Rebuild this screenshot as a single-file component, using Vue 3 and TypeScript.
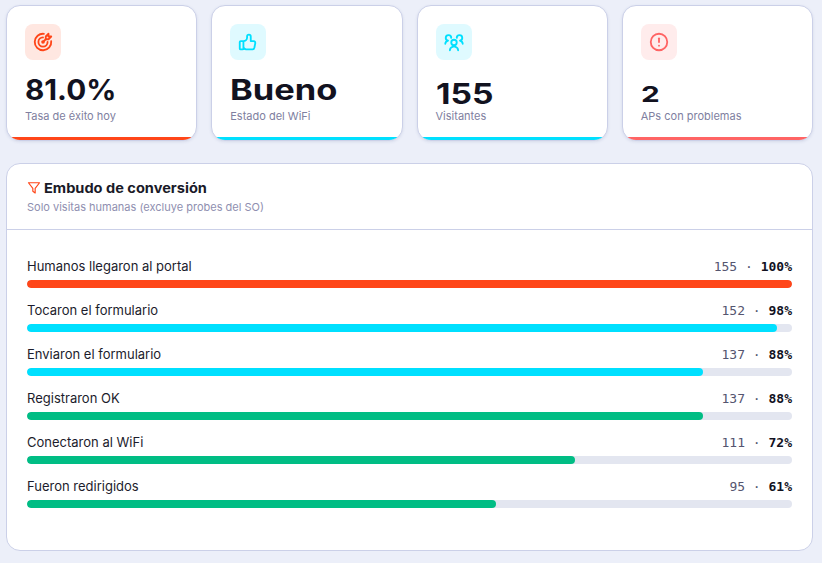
<script setup lang="ts">
// Portal dashboard: KPI cards + conversion funnel
interface Kpi { value: string; label: string; tone: string; icon: string[]; tweak: string }
interface Step { label: string; count: number; tone: string }

const kpis: Kpi[] = [
  {
    value: '81.0%', label: 'Tasa de éxito hoy', tone: 'orange', tweak: 'pct',
    icon: [
      'M12 12m-1 0a1 1 0 1 0 2 0a1 1 0 1 0 -2 0',
      'M12 7a5 5 0 1 0 5 5',
      'M13 3.055a9 9 0 1 0 7.941 7.945',
      'M15 6v3h3l3 -3h-3v-3z',
      'M15 9l-3 3',
    ],
  },
  {
    value: 'Bueno', label: 'Estado del WiFi', tone: 'cyan', tweak: 'word',
    icon: ['M7 11v8a1 1 0 0 1 -1 1h-2a1 1 0 0 1 -1 -1v-7a1 1 0 0 1 1 -1h3a4 4 0 0 0 4 -4v-1a2 2 0 0 1 4 0v5h3a2 2 0 0 1 2 2l-1 5a2 3 0 0 1 -2 2h-7a3 3 0 0 1 -3 -3'],
  },
  {
    value: '155', label: 'Visitantes', tone: 'cyan', tweak: 'low',
    icon: [
      'M9 12.5a3 3 0 1 0 6 0a3 3 0 0 0 -6 0',
      'M7.5 21c0 -2 1.5 -3.5 3.5 -4h2c2 .5 3.5 2 3.5 4',
      'M15 7.5a3 3 0 1 1 3.5 3c1.5 .5 3 2 3 3.5',
      'M9 7.5a3 3 0 1 0 -3.5 3c-1.5 .5 -3 2 -3 3.5',
    ],
  },
  {
    value: '2', label: 'APs con problemas', tone: 'red', tweak: 'small',
    icon: ['M3 12a9 9 0 1 0 18 0a9 9 0 0 0 -18 0', 'M12 8v4', 'M12 16h.01'],
  },
]

const total = 155
const steps: Step[] = [
  { label: 'Humanos llegaron al portal', count: 155, tone: 'orange' },
  { label: 'Tocaron el formulario', count: 152, tone: 'cyan' },
  { label: 'Enviaron el formulario', count: 137, tone: 'cyan' },
  { label: 'Registraron OK', count: 137, tone: 'green' },
  { label: 'Conectaron al WiFi', count: 111, tone: 'green' },
  { label: 'Fueron redirigidos', count: 95, tone: 'green' },
]
const pct = (n: number) => Math.round((n / total) * 100)
const barWidth = (n: number) => `${(n / total) * 100}%`
</script>

<template>
  <main class="page">
    <section class="kpis">
      <article v-for="k in kpis" :key="k.label" class="kpi" :class="k.tone">
        <div class="kpi-icon">
          <svg width="22" height="22" viewBox="0 0 24 24" fill="none" stroke="currentColor" stroke-width="2" stroke-linecap="round" stroke-linejoin="round">
            <path v-for="d in k.icon" :key="d" :d="d" />
          </svg>
        </div>
        <div class="kpi-value"><span :class="k.tweak">{{ k.value }}</span></div>
        <div class="kpi-label">{{ k.label }}</div>
      </article>
    </section>

    <section class="panel">
      <header class="panel-head">
        <h2>
          <svg width="14" height="14" viewBox="0 0 24 24" fill="none" stroke="#ff4619" stroke-width="2" stroke-linecap="round" stroke-linejoin="round">
            <path d="M2.5 3h19l-7.500 9.500v8l-4 -3v-5z" />
          </svg>
          <span>Embudo de conversión</span>
        </h2>
        <p>Solo visitas humanas (excluye probes del SO)</p>
      </header>
      <div class="panel-body">
        <div v-for="s in steps" :key="s.label" class="step" :class="s.tone">
          <div class="step-top">
            <span class="step-label">{{ s.label }}</span>
            <span class="step-num">{{ s.count }} · <b>{{ pct(s.count) }}%</b></span>
          </div>
          <div class="track"><div class="fill" :style="{ width: barWidth(s.count) }"></div></div>
        </div>
      </div>
    </section>
  </main>
</template>

<style>
html, body { background: #eceff9; }
</style>

<style scoped>
.page { padding: 5px 9px 12px 6px; font-family: Inter, "Noto Sans", sans-serif; color: #12121f; }
.orange { --tone: #ff4619; --soft: #ffe7e1; }
.cyan { --tone: #00e0ff; --soft: #dffaff; }
.red { --tone: #ff6464; --soft: #ffecec; }
.green { --tone: #00bd84; --soft: #dff7ef; }

.kpis { display: grid; grid-template-columns: repeat(4, 1fr); gap: 14px; }
.kpi {
  position: relative; overflow: hidden; height: 136px; box-sizing: border-box;
  padding: 18px 18px 0; background: #fff;
  border: 1px solid #cbd0e8; border-radius: 14px;
  box-shadow: 0 1px 3px rgba(60, 70, 130, .12);
}
.kpi::after { content: ""; position: absolute; left: 0; right: 0; bottom: 0; height: 3px; background: var(--tone); }
.kpi-icon {
  width: 36px; height: 36px; border-radius: 8px; background: var(--soft); color: var(--tone);
  display: flex; align-items: center; justify-content: center;
}
.kpi-value {
  margin-top: 13px; height: 34px; line-height: 34px;
  font-weight: 700; font-size: 28px; color: #12121f;
}
.kpi-value span { display: inline-block; line-height: 26px; transform-origin: left center; }
.pct { transform: scaleX(1.06); }
.word { transform: scaleX(1.23); }
.low { transform: translateY(4px) scaleX(1.2); }
.small { font-size: 22px; transform: translateY(2px) scaleX(1.35); }
.kpi-label { margin-top: 1px; font-size: 11px; line-height: 16px; color: #8080a0; }

.panel {
  margin-top: 22px; height: 388px; box-sizing: border-box; background: #fff;
  border: 1px solid #cbd0e8; border-radius: 14px;
}
.panel-head { height: 66px; box-sizing: border-box; padding: 15px 20px 0; border-bottom: 1px solid #cbd0e8; }
.panel-head h2 {
  margin: 0; display: flex; align-items: center; gap: 3px;
  font-size: 13.5px; line-height: 18px; font-weight: 700; color: #1a1a28;
}
.panel-head h2 span { display: inline-block; transform: scaleX(1.08); transform-origin: left center; }
.panel-head p { margin: 2px 0 0; font-size: 11px; line-height: 16px; color: #8f8fb0; }
.panel-body { padding: 27px 20px 0; display: flex; flex-direction: column; gap: 13px; }
.step-top { display: flex; justify-content: space-between; align-items: center; height: 18px; margin-bottom: 5px; }
.step-label { font-size: 13px; color: #1c1c2c; }
.step-num { font-family: "DejaVu Sans Mono", monospace; font-size: 13px; color: #55556f; }
.step-num b { color: #12121f; }
.track { height: 8px; border-radius: 4px; background: #e3e6f0; overflow: hidden; }
.fill { height: 100%; border-radius: 4px; background: var(--tone); }
</style>
